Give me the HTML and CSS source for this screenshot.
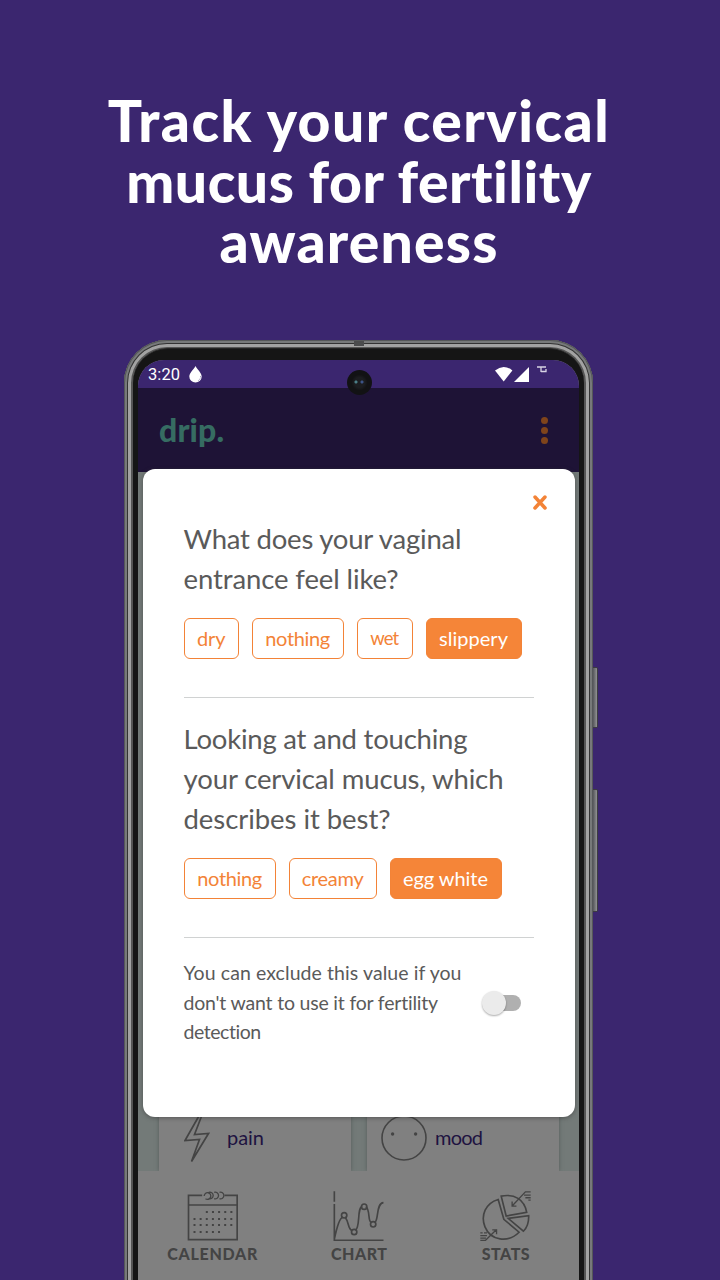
FILE: index.html
```html
<!DOCTYPE html>
<html lang="en">
<head>
<meta charset="utf-8">
<title>drip. cervical mucus tracking</title>
<link rel="stylesheet" href="styles.css">
</head>
<body>
<main class="promo">
  <h1 class="headline">
    <span class="line" data-fit="501">Track your cervical</span>
    <span class="line" data-fit="466">mucus for fertility</span>
    <span class="line" data-fit="278">awareness</span>
  </h1>

  <div class="phone">
    <i class="side-button power"></i>
    <i class="side-button volume"></i>
    <i class="antenna"></i>
    <div class="bezel">
      <div class="screen">
        <div class="status">
          <span class="clock" data-fit="32">3:20</span>
          <svg class="drop" viewBox="0 0 13 17"><path d="M6.5 0C5 3 .3 7 .3 10.500a6.200 6 0 0 0 12.400 0C12.700 7 8 3 6.500 0Z" fill="#fff"/><path d="M11.500 10q.3 3.500-3 5" fill="none" stroke="#3b266f" stroke-width=".5" stroke-dasharray="1 .6"/></svg>
          <svg class="signals" viewBox="0 0 54 17">
            <path d="M0 4.500Q8.700-2.500 17.400 4.500L8.700 15.500Z" fill="#fff"/>
            <path d="M19 16 34 1v15Z" fill="#fff"/>
            <path d="M42 1h9M46 1v5M46 5.500h5V3" fill="none" stroke="#d8d4e4" stroke-width="1.300"/>
          </svg>
        </div>
        <header class="appbar">
          <span class="brand" data-fit="65">drip.</span>
          <span class="kebab"><i></i><i></i><i></i></span>
        </header>
        <section class="tiles">
          <div class="tile">
            <svg class="bolt" viewBox="0 0 26 50"><path d="M15.500 2 1 27.500 15.500 26.500 7.500 48.500 24.500 20.500 10.500 21.500 18 2" fill="none" stroke="#444" stroke-width="1.700"/></svg>
            <span data-fit="37">pain</span>
          </div>
          <div class="tile">
            <svg class="face" viewBox="0 0 46 46"><circle cx="23" cy="23" r="22" fill="none" stroke="#444" stroke-width="1.600"/><g fill="#444"><circle cx="11.600" cy="19" r="1.700"/><circle cx="34.600" cy="19" r="1.700"/></g></svg>
            <span data-fit="48">mood</span>
          </div>
        </section>
        <nav class="tabs">
          <div class="tab">
            <svg viewBox="0 0 150 150" fill="none" stroke="#444" stroke-width="5">
              <path d="M44 13H3V146H149V13H111M3 42H149"/>
              <path d="M50 15a10 10 0 1 1 4 8M64 4a10 10 0 1 1 0 19M80 4a10 10 0 1 1 0 19M96 4a10 10 0 1 1 0 19" stroke-width="4"/>
              <g stroke-width="6" stroke-dasharray="6 12.400"><path d="M55 63H136M18 84H136M18 102H136M18 123H100"/></g>
            </svg>
            <span data-fit="90">CALENDAR</span>
          </div>
          <div class="tab">
            <svg viewBox="0 0 150 150" fill="none" stroke="#444" stroke-width="5">
              <path d="M2.500 1V32M2.500 39V148H150M2 147C10 108 17 82 27 79M36 80C48 96 42 113 55 118M66 118C81 108 70 50 86 47M97 47C111 57 102 90 113 94M124 94C136 88 127 36 150 35"/>
              <circle cx="32" cy="73" r="8"/><circle cx="62" cy="123" r="8"/><circle cx="92" cy="47" r="8"/><circle cx="119" cy="100" r="8"/>
            </svg>
            <span data-fit="56">CHART</span>
          </div>
          <div class="tab">
            <svg viewBox="0 0 154 150" fill="none" stroke="#444" stroke-width="5">
              <path d="M55 25C17 36 1 73 15 108C32 150 85 157 118 124L72 85Z"/>
              <path d="M64 15C104 7 134 25 141 64L79 75Z"/>
              <path d="M85 82 147 74Q148 105 131 121Z"/>
              <path d="M97 45 137 2H153M97 31V45H110M133 12H153M137 20H153M146 27H153" stroke-width="4"/>
              <path d="M50 116 16 149H1M37 117H50V130M1 142H18M1 134H21M1 126H8M12 126H21" stroke-width="4"/>
            </svg>
            <span data-fit="48">STATS</span>
          </div>
        </nav>
        <section class="dialog">
          <svg class="close" viewBox="0 0 14 15"><path d="M2 2 12 13M12 2 2 13" stroke="#f38337" stroke-width="3.500" stroke-linecap="round"/></svg>
          <h2 class="question">
            <span class="line" data-fit="278">What does your vaginal</span>
            <span class="line" data-fit="215">entrance feel like?</span>
          </h2>
          <div class="chips">
            <button class="chip w56"><span data-fit="28.5">dry</span></button>
            <button class="chip w93"><span data-fit="65">nothing</span></button>
            <button class="chip w57"><span class="narrow" data-fit="29">wet</span></button>
            <button class="chip w96 on"><span data-fit="69">slippery</span></button>
          </div>
          <hr>
          <h2 class="question second">
            <span class="line" data-fit="284">Looking at and touching</span>
            <span class="line" data-fit="320">your cervical mucus, which</span>
            <span class="line" data-fit="207">describes it best?</span>
          </h2>
          <div class="chips">
            <button class="chip w93"><span data-fit="65">nothing</span></button>
            <button class="chip w89"><span data-fit="62">creamy</span></button>
            <button class="chip w112 on"><span data-fit="85">egg white</span></button>
          </div>
          <hr>
          <div class="exclude">
            <p>
              <span class="line" data-fit="278">You can exclude this value if you</span>
              <span class="line" data-fit="255">don't want to use it for fertility</span>
              <span class="line" data-fit="78">detection</span>
            </p>
            <span class="switch"><i></i></span>
          </div>
        </section>
        <i class="camera"></i>
      </div>
    </div>
  </div>
</main>
<script src="fit.js"></script>
</body>
</html>
```
FILE: styles.css
```css
* { box-sizing: border-box; }
body {
  margin: 0;
  width: 720px;
  height: 1280px;
  overflow: hidden;
  background: #3b266f;
  font-family: Lato, "Open Sans", sans-serif;
}
.promo {
  height: 1280px;
  overflow: hidden;
  display: flex;
  flex-direction: column;
  align-items: center;
}
.line { display: table; white-space: nowrap; }
[data-fit] { white-space: nowrap; }
.headline {
  flex: none;
  width: 720px;
  height: 340px;
  margin: 0;
  padding: 90px 2px 0 0;
  color: #fff;
  font-size: 57px;
  font-weight: 900;
  line-height: 60.5px;
}
.headline .line { margin: 0 auto; }

.phone {
  flex: none;
  position: relative;
  width: 469px;
  height: 1000px;
  margin-right: 3px;
  padding: 1px 2px;
  border-radius: 43px 43px 0 0;
  background: #4a4a4c;
  box-shadow: inset 0 0 0 1px #555759, inset 0 0 0 3px #77797a, inset 0 0 0 4px #333, inset 0 0 0 7px #a2a2a2, inset 0 0 0 9px #555;
}
.bezel {
  height: 100%;
  margin: 7px 7px 0;
  padding: 11px 5px 0;
  border-radius: 35px 35px 0 0;
  background: #151515;
  border-top: 1px solid #242424;
}
.side-button {
  position: absolute;
  left: 469px;
  width: 5px;
  border: 1px solid #3c3c40;
  border-left: 0;
  border-radius: 0 2px 2px 0;
  background: linear-gradient(90deg, #55565a, #929295);
}
.power { top: 327px; height: 61px; }
.volume { top: 449px; height: 123px; }
.antenna {
  position: absolute;
  top: 1px;
  left: 230px;
  width: 10px;
  height: 5px;
  background: #4b4c4d;
}
.screen {
  position: relative;
  height: 920px;
  width: 441px;
  overflow: hidden;
  border-radius: 26px 26px 0 0;
  display: flex;
  flex-direction: column;
  background: #808080;
}
.status {
  flex: none;
  height: 28px;
  padding: 0 30px 0 10px;
  display: flex;
  align-items: center;
  background: #3b266f;
  color: #fff;
}
.clock { font: 400 16.500px/28px Roboto, sans-serif; width: 32px; padding-top: 2px; }
.drop { width: 13px; height: 17px; margin-left: 9px; }
.signals { width: 54px; height: 17px; margin-left: auto; }
.appbar {
  flex: none;
  height: 84px;
  padding: 0 31px 0 21px;
  display: flex;
  align-items: center;
  justify-content: space-between;
  background: #1e1336;
}
.brand { color: #366c62; font-size: 32px; font-weight: 900; line-height: 36px; }
.kebab { display: grid; gap: 3px; }
.kebab i { width: 7px; height: 7px; border-radius: 50%; background: #7f441b; }
.tiles {
  height: 699px;
  padding: 0 20px 0 21px;
  display: flex;
  gap: 16px;
  background: #737a78;
}
.tile {
  flex: 1;
  display: flex;
  align-items: flex-end;
  background: #808080;
  box-shadow: 0 0 4px #555b59;
  color: #1e1341;
  font-size: 20px;
}
.tile span { line-height: 24px; margin: 0 0 22px 17px; }
.bolt { width: 26px; height: 50px; margin: 0 0 8px 25px; }
.face { width: 46px; height: 46px; margin: 0 0 10px 14px; }
.face + span { margin-left: 8px; }
.tabs {
  flex: none;
  height: 109px;
  position: relative;
  display: grid;
  grid-template-columns: repeat(3, 1fr);
  padding-left: 1px;
  background: #808080;
  color: #444;
  font-size: 16px;
  font-weight: 900;
}
.tab { display: flex; flex-direction: column; align-items: center; padding-top: 20px; }
.tab svg { width: 51px; height: 50px; }
.tab span { line-height: 20px; margin-top: 3px; }

.dialog {
  position: absolute;
  top: 109px;
  left: 5px;
  width: 431.500px;
  height: 648px;
  padding: 50px 40.5px 0 40.5px;
  border-radius: 12px;
  background: #fff;
  box-shadow: 0 1px 4px #3338;
  color: #5a5a5a;
}
.close { position: absolute; top: 26px; right: 27.500px; width: 14px; height: 15px; }
.question { margin: 0; font-size: 27.500px; line-height: 40px; font-weight: 400; }
.chips { display: flex; gap: 12.500px; margin-top: 19px; }
.chip {
  height: 41px;
  padding: 0 0 2px;
  border: 1px solid #f38337;
  border-radius: 6px;
  background: #fff;
  color: #f38337;
  font: 400 20px/24px Lato, sans-serif;
}
.chip.on { background: #f58538; color: #fff; }
.narrow { font-size: 18.500px; }
.w56 { width: 55.500px; } .w57 { width: 56.500px; } .w89 { width: 88.500px; }
.w93 { width: 92.500px; } .w96 { width: 96px; } .w112 { width: 112px; }
hr { height: 1px; border: 0; margin: 38px 0 0; background: #d0d2d2; }
.second { padding-top: 21px; }
.exclude { display: flex; justify-content: space-between; padding: 20px 13px 0 0; }
.exclude p { margin: 0; font-size: 19.500px; line-height: 29.500px; }
.switch { width: 34px; height: 16px; margin-top: 37px; border-radius: 8px; background: #b0b0b0; }
.switch i { display: block; width: 24px; height: 24px; margin: -4px 0 0 -5px; border-radius: 50%; background: #ebebeb; box-shadow: 0 1px 2px #0005; }
.camera {
  position: absolute;
  top: 10px;
  left: 209px;
  width: 25px;
  height: 25px;
  border-radius: 50%;
  background: radial-gradient(circle at 9px 12px, #4b7f88 0 1px, transparent 2px), radial-gradient(circle at 15px 12px, #3c5488 0 1px, transparent 2px), radial-gradient(circle, #1c1d20 0 5px, #121214 8px);
}
```
FILE: fit.js
```js
// Track each text line so that it fills its design width.
document.querySelectorAll('[data-fit]').forEach(function (el) {
  var range = document.createRange();
  range.selectNodeContents(el);
  var natural = range.getBoundingClientRect().width;
  var n = el.textContent.length;
  var spacing = (Number(el.dataset.fit) - natural) / (n - 1);
  el.style.letterSpacing = spacing + 'px';
  el.style.marginRight = el.classList.contains('line') ? '' : -spacing + 'px';
});
```
